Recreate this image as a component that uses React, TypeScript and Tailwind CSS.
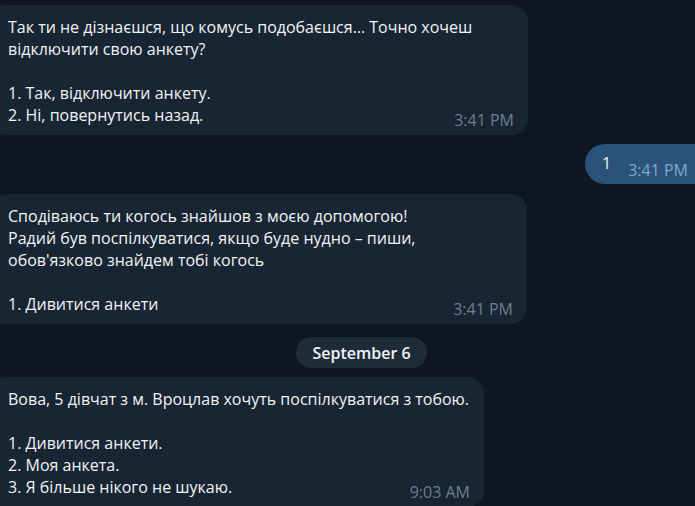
const Incoming = ({ text, time, width }: { text: string; time: string; width: string }) => (
  <div className={`relative ${width} ml-[-10px] rounded-[16px] bg-[#182533] pl-[18px] pt-[11px] pb-[9px]`}>
    <p className="whitespace-pre-line text-[16px] leading-[22px] text-[#f2f4f6]">{text}</p>
    <span className="absolute right-[14px] bottom-[5px] text-[16px] leading-[20px] text-[#6d7f8f]">
      {time}
    </span>
  </div>
);

const App = () => {
  return (
    <div
      className="w-[695px] h-[506px] overflow-hidden bg-[#0e1621] pt-[5px]"
      style={{ fontFamily: '"Open Sans", "Noto Sans", sans-serif' }}
    >
      <Incoming
        text={"Так ти не дізнаєшся, що комусь подобаєшся… Точно хочеш\nвідключити свою анкету?\n\n1. Так, відключити анкету.\n2. Ні, повернутись назад."}
        time="3:41 PM"
        width="w-[538px]"
      />

      <div className="mt-[9px] flex justify-end">
        <div className="mr-[-20px] flex h-[40px] items-start rounded-[20px] bg-[#2b5278] pl-[17px] pr-[27px]">
          <span className="mt-[8px] text-[16px] leading-[22px] text-[#f2f4f6]">1</span>
          <span className="ml-[17px] mt-[16px] text-[16px] leading-[20px] text-[#7da8d3]">3:41 PM</span>
        </div>
      </div>

      <div className="mt-[10px]">
        <Incoming
          text={"Сподіваюсь ти когось знайшов з моєю допомогою!\nРадий був поспілкуватися, якщо буде нудно – пиши,\nобов'язково знайдем тобі когось\n\n1. Дивитися анкети"}
          time="3:41 PM"
          width="w-[537px]"
        />
      </div>

      <div className="mt-[13px] flex justify-center pl-[28px]">
        <span className="flex h-[31px] items-center rounded-full bg-[#1e2c3a] px-[16px] text-[16px] font-semibold text-[#f2f4f6]">
          September 6
        </span>
      </div>

      <div className="mt-[9px]">
        <Incoming
          text={"Вова, 5 дівчат з м. Вроцлав хочуть поспілкуватися з тобою.\n\n1. Дивитися анкети.\n2. Моя анкета.\n3. Я більше нікого не шукаю."}
          time="9:03 AM"
          width="w-[494px]"
        />
      </div>
    </div>
  );
};

export default App;
